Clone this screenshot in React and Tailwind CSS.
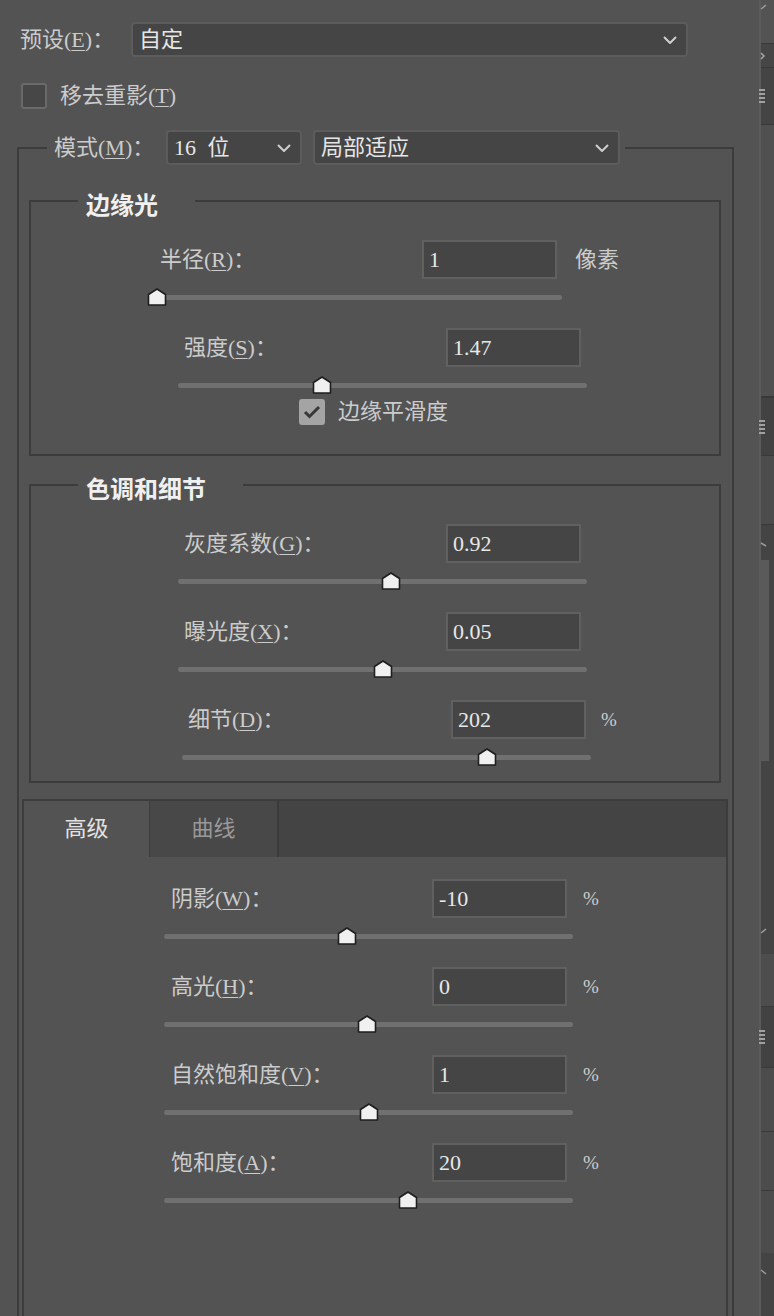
import React from 'react';

// dark photoshop-like HDR toning dialog

const Chevron = () => (
  <svg width="14" height="8" viewBox="0 0 14 8" className="shrink-0">
    <polyline points="1,1 7,7 13,1" fill="none" stroke="#cfcfcf" strokeWidth="2" />
  </svg>
);

const Key = ({ t, k, colon = true }) => (
  <span className="whitespace-nowrap">
    {t}(<span className="underline decoration-1 underline-offset-[3px]">{k}</span>){colon ? '：' : ''}
  </span>
);

const Select = ({ value, w }) => (
  <div className={`${w} flex h-[35px] items-center justify-between rounded-[4px] border-2 border-[#5c5c5c] bg-[#454545] pl-[6px] pr-[9px] text-[#e6e6e6]`}>
    <span className="[word-spacing:6px]">{value}</span>
    <Chevron />
  </div>
);

const NumBox = ({ value }) => (
  <div className="flex h-[39px] w-[135px] shrink-0 items-center border-2 border-[#606060] bg-[#454545] pl-[5px] text-[#e8e8e8]">
    {value}
  </div>
);

const Check = ({ checked }) =>
  checked ? (
    <div className="flex h-[26px] w-[26px] shrink-0 items-center justify-center rounded-[3px] bg-[#a4a4a4]">
      <svg width="18" height="14" viewBox="0 0 18 14">
        <polyline points="2,7 6.5,11.5 16,2" fill="none" stroke="#383838" strokeWidth="3" />
      </svg>
    </div>
  ) : (
    <div className="h-[26px] w-[26px] shrink-0 rounded-[3px] border-2 border-[#6a6a6a] bg-[#474747]" />
  );

const Slider = ({ cls, pos }) => (
  <div className={`relative mt-[9px] h-[18px] ${cls}`}>
    <div className="absolute left-0 right-0 top-[7px] h-[5px] rounded-full bg-[#707070]" />
    <svg width="20" height="18" viewBox="0 0 20 18" className="absolute top-0" style={{ left: pos - 10 }}>
      <path d="M10 1 L18.5 6.5 V17 H1.5 V6.5 Z" fill="#f0f0f0" stroke="#1e1e1e" strokeWidth="1.6" strokeLinejoin="round" />
    </svg>
  </div>
);

const Control = ({ r }) => (
  <div>
    <div className={`flex h-[39px] items-center ${r.ml}`}>
      <div className={`${r.lw} shrink-0`}>{r.label}</div>
      <NumBox value={r.value} />
      {r.unit && <span className={`${r.ug} ${r.unit === '%' ? 'text-[19px]' : ''}`}>{r.unit}</span>}
    </div>
    <Slider cls={r.s} pos={r.pos} />
  </div>
);

const Group = ({ title, cls = '', children }) => (
  <fieldset className={`min-w-0 border-2 border-[#3c3c3c] ${cls}`}>
    <legend className="ml-[47px] pl-[8px] pr-[37px] pt-[11px] text-[24px] font-bold leading-[24px] text-[#f0f0f0]">
      {title}
    </legend>
    {children}
  </fieldset>
);

const edgeRows = [
  { label: <Key t="半径" k="R" />, value: '1', unit: '像素', ml: 'ml-[129px]', lw: 'w-[262px]', ug: 'ml-[18px]', s: 'ml-[117px] w-[414px]', pos: 9 },
  { label: <Key t="强度" k="S" />, value: '1.47', ml: 'ml-[153px]', lw: 'w-[262px]', s: 'ml-[147px] w-[409px]', pos: 144 },
];

const toneRows = [
  { label: <Key t="灰度系数" k="G" />, value: '0.92', ml: 'ml-[153px]', lw: 'w-[262px]', s: 'ml-[147px] w-[409px]', pos: 213 },
  { label: <Key t="曝光度" k="X" />, value: '0.05', ml: 'ml-[153px]', lw: 'w-[262px]', s: 'ml-[147px] w-[409px]', pos: 205 },
  { label: <Key t="细节" k="D" />, value: '202', unit: '%', ml: 'ml-[157px]', lw: 'w-[263px]', ug: 'ml-[15px]', s: 'ml-[151px] w-[409px]', pos: 305 },
];

const advRows = [
  { label: <Key t="阴影" k="W" />, value: '-10', pos: 183 },
  { label: <Key t="高光" k="H" />, value: '0', pos: 203 },
  { label: <Key t="自然饱和度" k="V" />, value: '1', pos: 205 },
  { label: <Key t="饱和度" k="A" />, value: '20', pos: 244 },
].map((r) => ({ ...r, unit: '%', ml: 'ml-[147px]', lw: 'w-[261px]', ug: 'ml-[16px]', s: 'ml-[140px] w-[409px]' }));

const Tick = ({ d }) => (
  <svg width="8" height="6" viewBox="0 0 8 6" className="-ml-[1px]">
    <path d={d} fill="none" stroke="#9c9c9c" strokeWidth="1.5" />
  </svg>
);

const Lines = () => (
  <div className="-ml-[2px] flex w-[6px] flex-col gap-[2px]">
    {[0, 1, 2, 3].map((i) => (
      <div key={i} className="h-[2px] bg-[#a0a0a0]" />
    ))}
  </div>
);

const Strip = () => (
  <div className="relative flex w-[15px] shrink-0 flex-col border-l-2 border-[#5b5b5b]">
    <div className="h-[43px] bg-[#535353] pt-[4px]"><Tick d="M1 5 L6 1" /></div>
    <div className="flex h-[24px] items-center border-t border-[#393939] bg-[#464646]">
      <svg width="6" height="8" viewBox="0 0 6 8" className="-ml-[1px]"><polyline points="1,1 4,4 1,7" fill="none" stroke="#a8a8a8" strokeWidth="1.5" /></svg>
    </div>
    <div className="flex h-[57px] items-center border-t border-[#393939] bg-[#444444]"><Lines /></div>
    <div className="h-[272px] border-t border-[#393939] bg-[#505050]" />
    <div className="flex h-[59px] items-center border-t-2 border-[#393939] bg-[#424242]"><Lines /></div>
    <div className="h-[69px] border-t border-[#393939] bg-[#4c4c4c]" />
    <div className="flex h-[430px] flex-col justify-between border-t border-[#393939] bg-[#444444] pb-[20px] pt-[17px]">
      <Tick d="M1 1 L6 4" />
      <Tick d="M1 5 L6 1" />
    </div>
    <div className="h-[52px] bg-[#4d4d4d]" />
    <div className="flex h-[61px] items-center border-t border-[#393939] bg-[#424242]"><Lines /></div>
    <div className="h-[64px] border-t border-[#393939] bg-[#4c4c4c]" />
    <div className="h-[59px] border-t border-[#393939] bg-[#4c4c4c]" />
    <div className="h-[63px] border-t border-[#393939] bg-[#4c4c4c]" />
    <div className="h-[63px] bg-[#444444] pt-[16px]"><Tick d="M1 1 L6 5" /></div>
    <div className="absolute -left-[2px] top-[560px] h-[201px] w-[10px] bg-[#5a5a5a]" />
  </div>
);

export default function App() {
  return (
    <div className="flex h-[1316px] w-[774px] overflow-hidden bg-[#535353] font-['Liberation_Serif','Noto_Sans_CJK_SC',serif] text-[22px] leading-[24px] text-[#cccccc]">
      <main className="w-[759px] shrink-0 pt-[22px]">
        <div className="flex items-center pl-[20px]">
          <div className="w-[111px] shrink-0"><Key t="预设" k="E" /></div>
          <Select value="自定" w="w-[557px]" />
        </div>

        <div className="mt-[26px] flex items-center pl-[21px]">
          <Check />
          <span className="ml-[13px]"><Key t="移去重影" k="T" colon={false} /></span>
        </div>

        <fieldset className="ml-[17px] mt-[21px] w-[717px] min-w-0 border-2 border-[#3c3c3c]">
          <legend className="ml-[28px] pl-[7px] pr-[5px]">
            <div className="flex items-center gap-[11px]">
              <div className="-mr-[11px] w-[112px] shrink-0"><Key t="模式" k="M" /></div>
              <Select value="16 位" w="w-[136px]" />
              <Select value="局部适应" w="w-[307px]" />
            </div>
          </legend>

          <div className="pb-[40px] pl-[10px] pr-[11px] pt-[18px]">
            <Group title="边缘光">
              <div className="flex flex-col gap-[22px] pt-[22px]">
                {edgeRows.map((r, i) => <Control key={i} r={r} />)}
              </div>
              <div className="mt-[5px] flex items-center pb-[29px] pl-[268px]">
                <Check checked />
                <span className="ml-[13px]">边缘平滑度</span>
              </div>
            </Group>

            <Group title="色调和细节" cls="mt-[11px]">
              <div className="flex flex-col gap-[22px] pb-[15px] pt-[22px]">
                {toneRows.map((r, i) => <Control key={i} r={r} />)}
              </div>
            </Group>

            <div className="-ml-[7px] mt-[16px] w-[706px] border-2 border-[#3c3c3c] pb-[120px]">
              <div className="flex h-[56px] bg-[#444444]">
                <div className="flex w-[126px] items-center justify-center border-r border-[#3d3d3d] bg-[#535353] text-[#e2e2e2]">高级</div>
                <div className="flex w-[129px] items-center justify-center border-r-2 border-[#3b3b3b] bg-[#484848] text-[#999999]">曲线</div>
              </div>
              <div className="flex flex-col gap-[22px] pt-[22px]">
                {advRows.map((r, i) => <Control key={i} r={r} />)}
              </div>
            </div>
          </div>
        </fieldset>
      </main>
      <Strip />
    </div>
  );
}
